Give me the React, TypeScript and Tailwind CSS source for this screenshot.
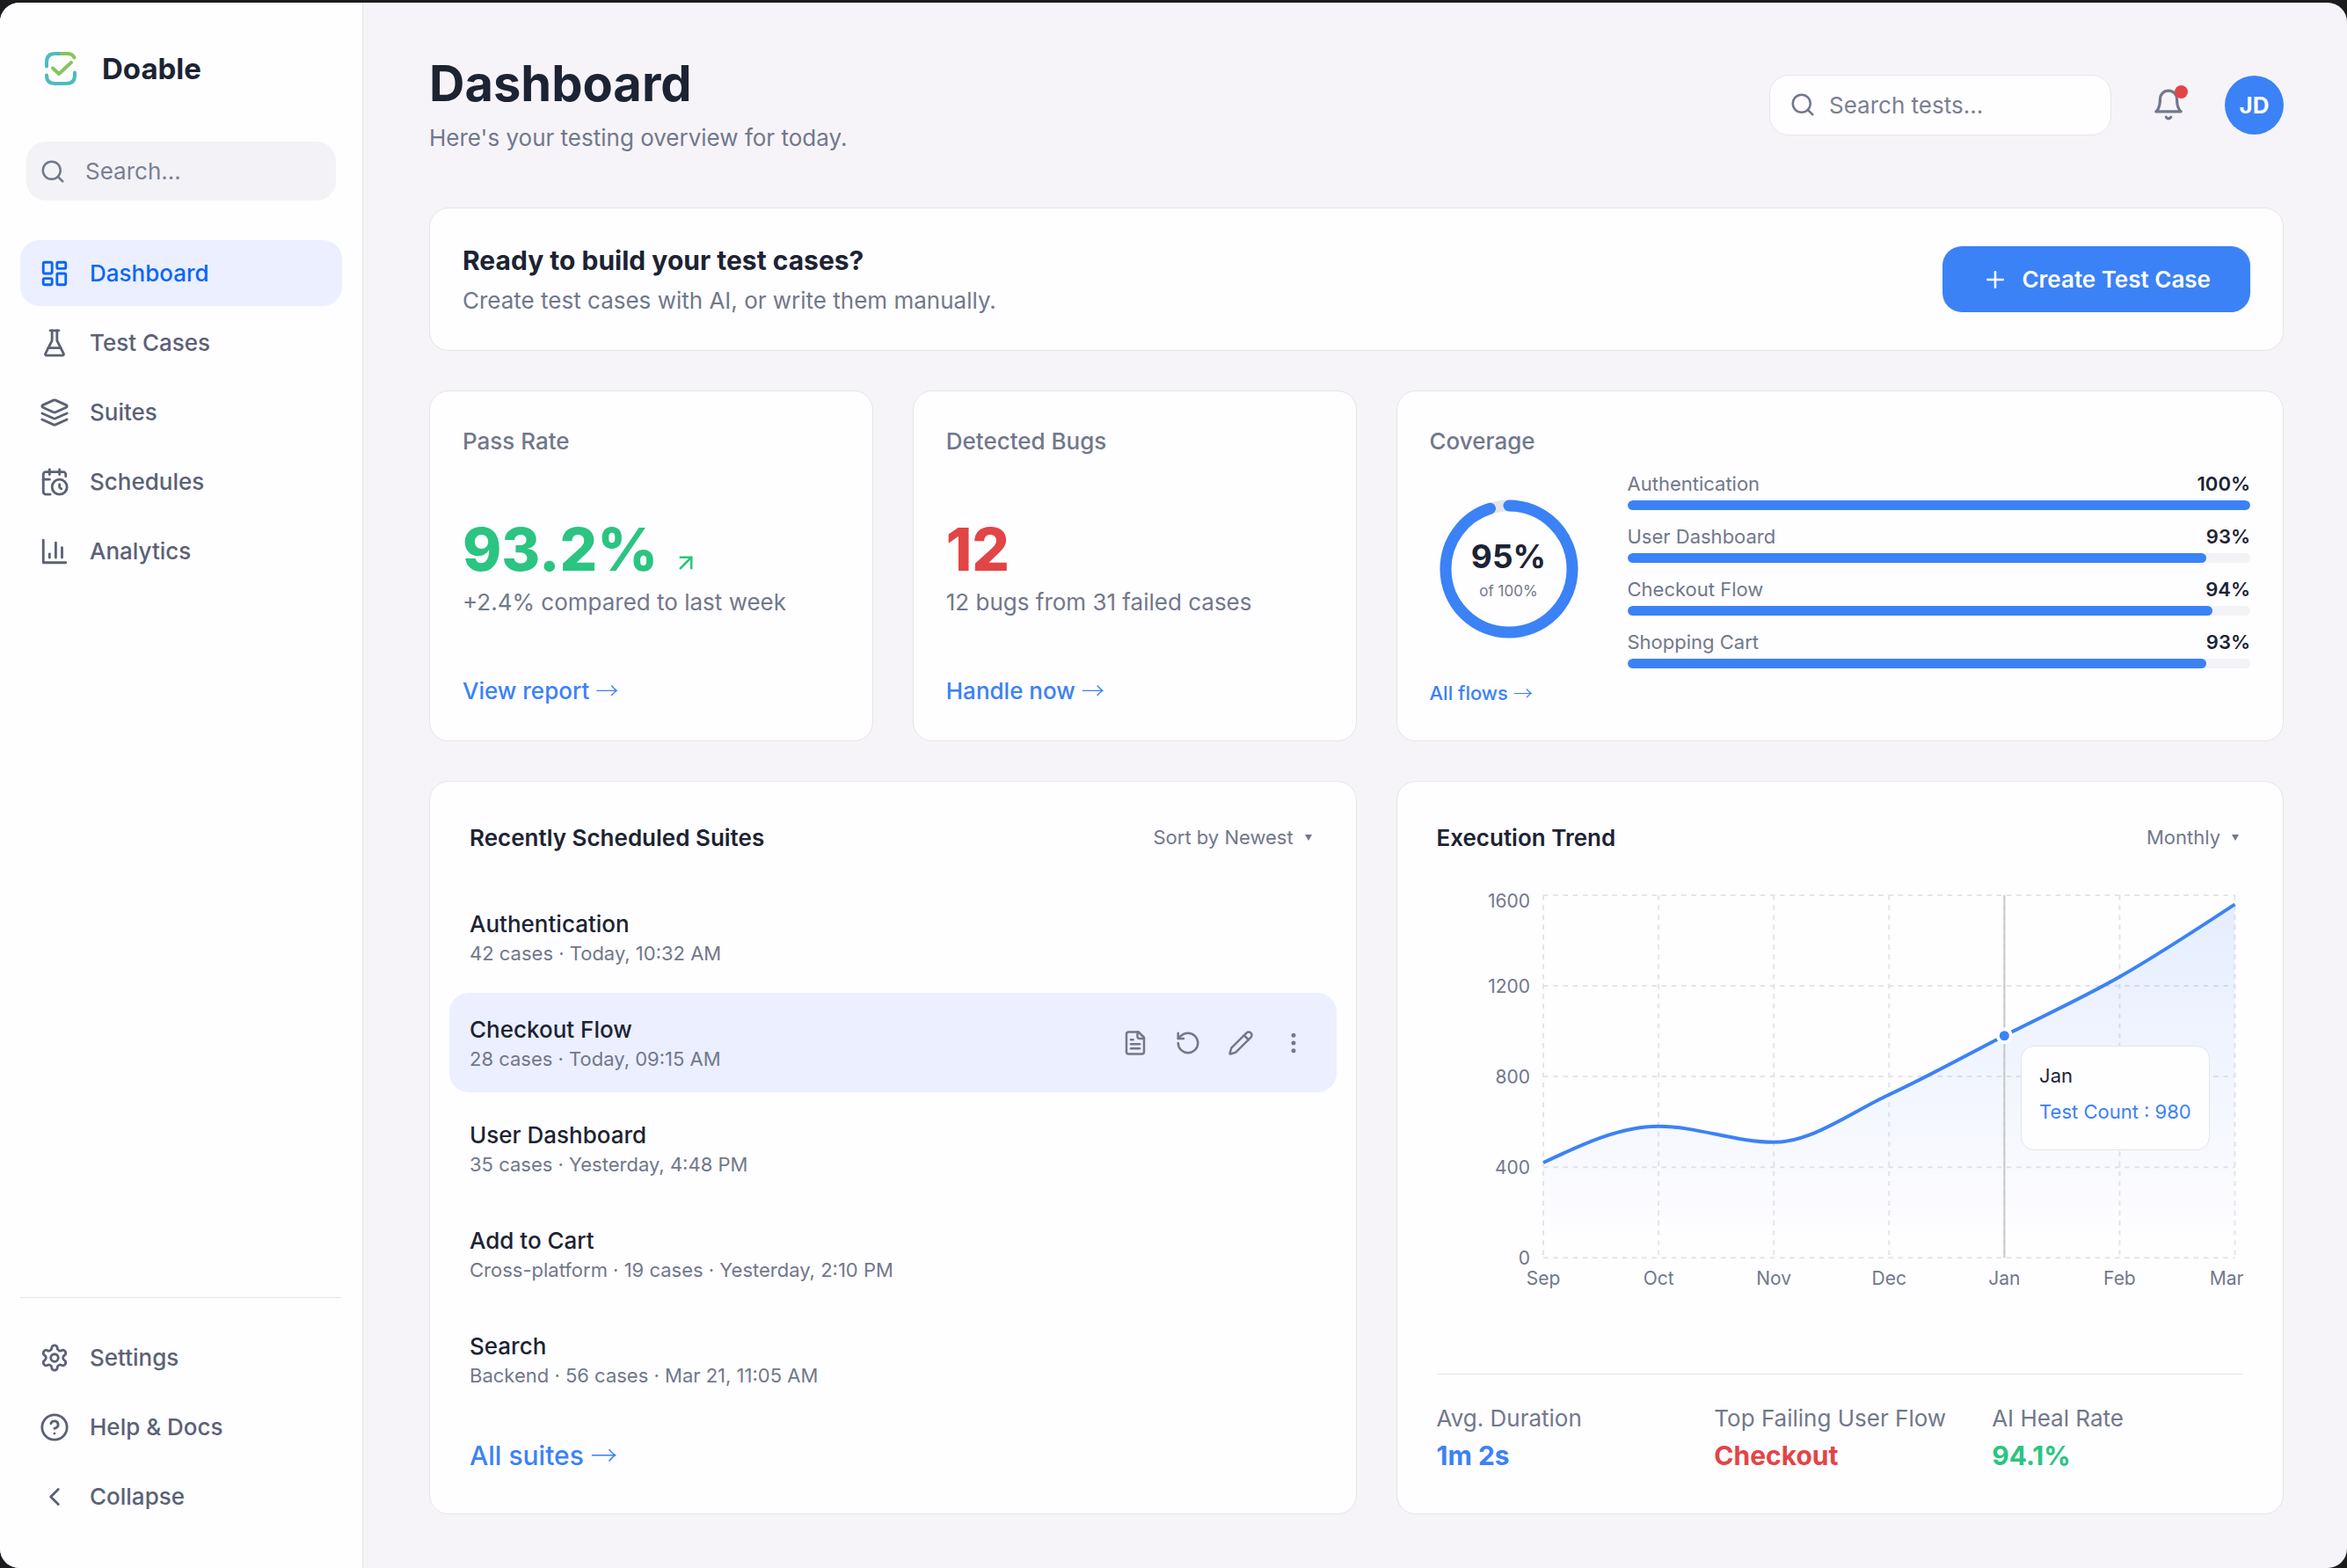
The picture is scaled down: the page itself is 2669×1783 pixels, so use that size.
import type { ReactNode } from "react";
import {
  ArrowUpRight,
  ChevronLeft,
  CircleQuestionMark,
  EllipsisVertical,
  LayoutDashboard,
  Pencil,
  Plus,
  RotateCcw,
  Search,
} from "lucide-react";

type IconProps = { className?: string };
type IconType = (props: IconProps) => ReactNode;

function Outline({ className, children }: { className?: string; children: ReactNode }) {
  return (
    <svg
      viewBox="0 0 24 24"
      className={className}
      fill="none"
      stroke="currentColor"
      strokeWidth="2"
      strokeLinecap="round"
      strokeLinejoin="round"
      aria-hidden="true"
    >
      {children}
    </svg>
  );
}

const FlaskIcon: IconType = ({ className }) => (
  <Outline className={className}>
    <path d="M10 2v7.527a2 2 0 0 1-.211.896L4.720 20.550a1 1 0 0 0 .9 1.450h12.760a1 1 0 0 0 .9-1.450l-5.069-10.127A2 2 0 0 1 14 9.527V2" />
    <path d="M8.500 2h7" />
    <path d="M7 16h10" />
  </Outline>
);

const LayersIcon: IconType = ({ className }) => (
  <Outline className={className}>
    <path d="m12.830 2.180a2 2 0 0 0-1.660 0L2.600 6.080a1 1 0 0 0 0 1.830l8.580 3.910a2 2 0 0 0 1.660 0l8.580-3.900a1 1 0 0 0 0-1.830Z" />
    <path d="m22 17.650-9.170 4.160a2 2 0 0 1-1.660 0L2 17.650" />
    <path d="m22 12.650-9.170 4.160a2 2 0 0 1-1.660 0L2 12.650" />
  </Outline>
);

const CalendarClockIcon: IconType = ({ className }) => (
  <Outline className={className}>
    <path d="M21 7.500V6a2 2 0 0 0-2-2H5a2 2 0 0 0-2 2v14a2 2 0 0 0 2 2h3.500" />
    <path d="M16 2v4" />
    <path d="M8 2v4" />
    <path d="M3 10h5" />
    <path d="M17.500 17.500 16 16.300V14" />
    <circle cx="16" cy="16" r="6" />
  </Outline>
);

const BarsIcon: IconType = ({ className }) => (
  <Outline className={className}>
    <path d="M3 3v18h18" />
    <path d="M18 17V9" />
    <path d="M13 17V5" />
    <path d="M8 17v-3" />
  </Outline>
);

const GearIcon: IconType = ({ className }) => (
  <Outline className={className}>
    <path d="M12.220 2h-.44a2 2 0 0 0-2 2v.18a2 2 0 0 1-1 1.730l-.43.25a2 2 0 0 1-2 0l-.15-.08a2 2 0 0 0-2.730.73l-.22.38a2 2 0 0 0 .73 2.730l.15.1a2 2 0 0 1 1 1.720v.51a2 2 0 0 1-1 1.740l-.15.09a2 2 0 0 0-.73 2.730l.22.38a2 2 0 0 0 2.730.73l.15-.08a2 2 0 0 1 2 0l.43.25a2 2 0 0 1 1 1.730V20a2 2 0 0 0 2 2h.44a2 2 0 0 0 2-2v-.18a2 2 0 0 1 1-1.730l.43-.25a2 2 0 0 1 2 0l.15.08a2 2 0 0 0 2.730-.73l.22-.39a2 2 0 0 0-.73-2.730l-.15-.08a2 2 0 0 1-1-1.740v-.5a2 2 0 0 1 1-1.740l.15-.09a2 2 0 0 0 .73-2.730l-.22-.38a2 2 0 0 0-2.730-.73l-.15.08a2 2 0 0 1-2 0l-.43-.25a2 2 0 0 1-1-1.730V4a2 2 0 0 0-2-2z" />
    <circle cx="12" cy="12" r="3" />
  </Outline>
);

const BellIcon: IconType = ({ className }) => (
  <Outline className={className}>
    <path d="M6 8a6 6 0 0 1 12 0c0 7 3 9 3 9H3s3-2 3-9" />
    <path d="M10.300 21a1.940 1.940 0 0 0 3.400 0" />
  </Outline>
);

const DocumentIcon: IconType = ({ className }) => (
  <Outline className={className}>
    <path d="M15 2H6a2 2 0 0 0-2 2v16a2 2 0 0 0 2 2h12a2 2 0 0 0 2-2V7Z" />
    <path d="M14 2v4a2 2 0 0 0 2 2h4" />
    <path d="M10 9H8" />
    <path d="M16 13H8" />
    <path d="M16 17H8" />
  </Outline>
);

const DashboardIcon: IconType = ({ className }) => <LayoutDashboard className={className} />;
const HelpIcon: IconType = ({ className }) => <CircleQuestionMark className={className} />;
const RerunIcon: IconType = ({ className }) => <RotateCcw className={className} />;
const EditIcon: IconType = ({ className }) => <Pencil className={className} />;
const MoreIcon: IconType = ({ className }) => <EllipsisVertical className={className} />;

type NavEntry = { label: string; icon: IconType; active?: boolean };

const mainNav: NavEntry[] = [
  { label: "Dashboard", icon: DashboardIcon, active: true },
  { label: "Test Cases", icon: FlaskIcon },
  { label: "Suites", icon: LayersIcon },
  { label: "Schedules", icon: CalendarClockIcon },
  { label: "Analytics", icon: BarsIcon },
];

const coverage = [
  { name: "Authentication", value: 100 },
  { name: "User Dashboard", value: 93 },
  { name: "Checkout Flow", value: 94 },
  { name: "Shopping Cart", value: 93 },
];

const suites = [
  { name: "Authentication", meta: "42 cases · Today, 10:32 AM" },
  { name: "Checkout Flow", meta: "28 cases · Today, 09:15 AM", active: true },
  { name: "User Dashboard", meta: "35 cases · Yesterday, 4:48 PM" },
  { name: "Add to Cart", meta: "Cross-platform · 19 cases · Yesterday, 2:10 PM" },
  { name: "Search", meta: "Backend · 56 cases · Mar 21, 11:05 AM" },
];

const suiteActions: { label: string; icon: IconType }[] = [
  { label: "View details", icon: DocumentIcon },
  { label: "Run again", icon: RerunIcon },
  { label: "Edit", icon: EditIcon },
  { label: "More", icon: MoreIcon },
];

const trend = [
  { month: "Sep", count: 420 },
  { month: "Oct", count: 580 },
  { month: "Nov", count: 510 },
  { month: "Dec", count: 720 },
  { month: "Jan", count: 980 },
  { month: "Feb", count: 1240 },
  { month: "Mar", count: 1560 },
];

function Logo() {
  return (
    <svg viewBox="0 0 60 60" className="size-[60px]" fill="none" strokeWidth="4" strokeLinecap="round" strokeLinejoin="round" aria-hidden="true">
      <path d="M15 27.500V22.500Q15 13 24.500 13H31" stroke="#4bbcc0" />
      <path d="M32 13H38.500Q44.500 13 46.500 17.500" stroke="#84c55c" />
      <path d="M47 34.500V37.500Q47 47 37.500 47H24.500Q15 47 15 37.500" stroke="#4bbcc0" />
      <path d="M22 29.500L29 36L43 23" stroke="#84c55c" />
    </svg>
  );
}

function NavItem({ label, icon: Icon, active }: NavEntry) {
  return (
    <a
      href="#"
      aria-current={active ? "page" : undefined}
      className={
        "flex h-[75px] items-center gap-[23px] rounded-[22px] px-[22px] text-[26px] font-medium " +
        (active ? "bg-[#ebefff] text-[#0866fa]" : "text-[#5b6175]")
      }
    >
      <Icon className="size-[34px] shrink-0" />
      {label}
    </a>
  );
}

function Sidebar() {
  return (
    <aside className="flex w-[413px] shrink-0 flex-col border-r border-[#e4e5ea] bg-[#fefdff] pt-[45px] pb-[44px]">
      <div className="flex items-center gap-[18px] pl-[38px]">
        <Logo />
        <span className="text-[33px] leading-[50px] font-bold text-[#1c2333]">Doable</span>
      </div>
      <label className="mx-[30px] mt-[53px] flex h-[67px] items-center gap-[22px] rounded-[22px] bg-[#f3f2f6] px-[15px] text-[#71788b]">
        <Search className="size-[30px] shrink-0" />
        <input
          type="text"
          aria-label="Search"
          placeholder="Search..."
          className="h-full w-full min-w-0 bg-transparent text-[26px] outline-none placeholder:text-[#7a8092]"
        />
      </label>
      <nav className="mt-[45px] flex flex-col gap-1 px-[23px]">
        {mainNav.map((item) => (
          <NavItem key={item.label} {...item} />
        ))}
      </nav>
      <nav className="mx-[23px] mt-auto flex flex-col gap-1 border-t border-[#e4e5ea] pt-[30px]">
        <NavItem label="Settings" icon={GearIcon} />
        <NavItem label="Help & Docs" icon={HelpIcon} />
        <button type="button" className="flex h-[75px] items-center gap-[23px] rounded-[22px] px-[22px] text-[26px] font-medium text-[#5b6175]">
          <ChevronLeft className="size-[34px] shrink-0" />
          Collapse
        </button>
      </nav>
    </aside>
  );
}

function Header() {
  return (
    <header className="flex items-center justify-between">
      <div>
        <h1 className="text-[56px] leading-[67px] font-bold text-[#1c2333]">Dashboard</h1>
        <p className="mt-2 text-[26px] leading-[39px] text-[#71788b]">Here's your testing overview for today.</p>
      </div>
      <div className="flex items-center gap-[30px]">
        <label className="flex h-[69px] w-[389px] items-center gap-[15px] rounded-[22px] border border-[#e4e5ea] bg-[#fefdff] px-[22px] text-[#71788b]">
          <Search className="size-[30px] shrink-0" />
          <input
            type="text"
            aria-label="Search tests"
            placeholder="Search tests..."
            className="h-full w-full min-w-0 bg-transparent text-[26px] outline-none placeholder:text-[#7a8092]"
          />
        </label>
        <button type="button" aria-label="Notifications" className="relative flex size-[69px] items-center justify-center text-[#71788b]">
          <BellIcon className="size-[38px]" />
          <span className="absolute top-[12px] right-[12px] size-[15px] rounded-full bg-[#e24546]" />
        </button>
        <button type="button" aria-label="Account" className="flex size-[67px] items-center justify-center rounded-full bg-[#3b82f6] text-[26px] font-bold text-white">
          JD
        </button>
      </div>
    </header>
  );
}

function Card({ className, children }: { className: string; children: ReactNode }) {
  return <section className={"rounded-[22px] border border-[#e4e5ea] bg-[#fefdff] " + className}>{children}</section>;
}

function Arrow() {
  return <span className="font-['Noto_Sans_CJK_JP',sans-serif] leading-none font-light">→</span>;
}

function StatCard(props: { title: string; value: string; tone: string; note: string; link: string; rising?: boolean }) {
  return (
    <Card className="flex flex-col p-[37px]">
      <h2 className="text-[26px] leading-[39px] font-medium text-[#71788b]">{props.title}</h2>
      <div className="flex flex-1 flex-col justify-center">
        <div className={"flex items-end gap-[17px] " + props.tone}>
          <span className="text-[67px] leading-[81px] font-extrabold">{props.value}</span>
          {props.rising && <ArrowUpRight className="mb-[10px] size-[30px]" />}
        </div>
        <p className="text-[26px] leading-[39px] text-[#71788b]">{props.note}</p>
      </div>
      <a href="#" className="text-[26px] leading-[39px] font-medium text-[#3b82f6]">
        {props.link} <Arrow />
      </a>
    </Card>
  );
}

function CoverageCard() {
  const radius = 72;
  const length = 2 * Math.PI * radius;
  return (
    <Card className="flex flex-col p-[37px]">
      <h2 className="text-[26px] leading-[39px] font-medium text-[#71788b]">Coverage</h2>
      <div className="my-[12px] flex items-center gap-[45px]">
        <div className="relative size-[180px] shrink-0">
          <svg viewBox="0 0 180 180" className="size-full -rotate-90" fill="none" strokeWidth="13" aria-hidden="true">
            <circle cx="90" cy="90" r={radius} stroke="#e4e5ea" />
            <circle cx="90" cy="90" r={radius} stroke="#3b82f6" strokeLinecap="round" strokeDasharray={`${length * 0.95} ${length}`} />
          </svg>
          <div className="absolute inset-0 flex flex-col items-center justify-center pt-1">
            <span className="text-[37px] leading-[46px] font-bold text-[#1c2333]">95%</span>
            <span className="text-[17px] leading-[32px] text-[#71788b]">of 100%</span>
          </div>
        </div>
        <ul className="flex flex-1 flex-col gap-[13px]">
          {coverage.map((flow) => (
            <li key={flow.name} className="flex flex-col gap-[2px]">
              <div className="flex justify-between text-[22px] leading-[34px]">
                <span className="text-[#71788b]">{flow.name}</span>
                <span className="font-semibold text-[#1c2333]">{flow.value}%</span>
              </div>
              <div className="h-[11px] overflow-hidden rounded-full bg-[#f3f2f6]">
                <div className="h-full rounded-full bg-[#3b82f6]" style={{ width: `${flow.value}%` }} />
              </div>
            </li>
          ))}
        </ul>
      </div>
      <a href="#" className="text-[22px] leading-[33px] font-medium text-[#3b82f6]">
        All flows <Arrow />
      </a>
    </Card>
  );
}

function Dropdown({ label, options }: { label: string; options: string[] }) {
  return (
    <div className="relative flex items-center text-[#71788b]">
      <select aria-label={label} className="appearance-none bg-transparent pr-[25px] text-[22px] leading-[37px] outline-none">
        {options.map((option) => (
          <option key={option}>{option}</option>
        ))}
      </select>
      <svg viewBox="0 0 8 7" className="pointer-events-none absolute right-[5px] h-[7px] w-[8px]" fill="currentColor" aria-hidden="true">
        <path d="M0 0H8L4 7Z" />
      </svg>
    </div>
  );
}

function SuitesCard() {
  return (
    <Card className="col-span-2 flex flex-col p-[45px]">
      <div className="flex items-center justify-between">
        <h2 className="text-[26px] leading-[37px] font-semibold text-[#1c2333]">Recently Scheduled Suites</h2>
        <Dropdown label="Sort order" options={["Sort by Newest", "Sort by Oldest"]} />
      </div>
      <ul className="-mx-[23px] mt-[38px] flex flex-col gap-[7px]">
        {suites.map((suite) => (
          <li
            key={suite.name}
            className={"flex items-center justify-between rounded-[22px] px-[23px] py-[23px] " + (suite.active ? "bg-[#ebefff]" : "")}
          >
            <div>
              <h3 className="text-[26px] leading-[37px] font-medium text-[#1c2333]">{suite.name}</h3>
              <p className="text-[22px] leading-[30px] text-[#71788b]">{suite.meta}</p>
            </div>
            {suite.active && (
              <div className="flex gap-2 text-[#71788b]">
                {suiteActions.map(({ label, icon: Icon }) => (
                  <button key={label} type="button" aria-label={label} className="flex size-[52px] items-center justify-center">
                    <Icon className="size-[30px]" />
                  </button>
                ))}
              </div>
            )}
          </li>
        ))}
      </ul>
      <a href="#" className="mt-auto text-[30px] leading-[42px] font-medium text-[#3b82f6]">
        All suites <Arrow />
      </a>
    </Card>
  );
}

const plot = { width: 917, height: 487, left: 121, right: 907, top: 9, bottom: 421, max: 1600 };

const points = trend.map((entry, i) => ({
  x: plot.left + (i * (plot.right - plot.left)) / (trend.length - 1),
  y: plot.bottom - (entry.count / plot.max) * (plot.bottom - plot.top),
}));

// Monotone cubic interpolation: no overshoot between neighbouring months.
function monotonePath(pts: { x: number; y: number }[]) {
  const slopes = pts.slice(1).map((p, i) => (p.y - pts[i].y) / (p.x - pts[i].x));
  const last = pts.length - 1;
  const tangents = pts.map((_, i) => {
    if (i === 0 || i === last) return 0;
    const a = slopes[i - 1];
    const b = slopes[i];
    if (a * b <= 0) return 0;
    return Math.sign(a) * 2 * Math.min(Math.abs(a), Math.abs(b), Math.abs(a + b) / 4);
  });
  tangents[0] = (3 * slopes[0] - tangents[1]) / 2;
  tangents[last] = (3 * slopes[last - 1] - tangents[last - 1]) / 2;
  return pts.slice(1).reduce((d, p, i) => {
    const q = pts[i];
    const third = (p.x - q.x) / 3;
    return `${d}C${q.x + third},${q.y + tangents[i] * third} ${p.x - third},${p.y - tangents[i + 1] * third} ${p.x},${p.y}`;
  }, `M${pts[0].x},${pts[0].y}`);
}

function TrendChart() {
  const line = monotonePath(points);
  const current = points[4];
  const ticks = [0, 400, 800, 1200, 1600];
  return (
    <div className="relative">
      <svg viewBox="0 0 917 487" className="w-full" role="img" aria-label="Test count by month">
        <defs>
          <linearGradient id="trend-fill" x1="0" y1="0" x2="0" y2="1">
            <stop offset="5%" stopColor="#3b82f6" stopOpacity="0.12" />
            <stop offset="95%" stopColor="#3b82f6" stopOpacity="0" />
          </linearGradient>
        </defs>
        <g stroke="#e4e5ea" strokeWidth="2" strokeDasharray="5.6 5.6">
          {ticks.map((tick) => {
            const y = plot.bottom - (tick / plot.max) * (plot.bottom - plot.top);
            return <line key={tick} x1={plot.left} x2={plot.right} y1={y} y2={y} />;
          })}
          {points.map((p) => (
            <line key={p.x} x1={p.x} x2={p.x} y1={plot.top} y2={plot.bottom} />
          ))}
        </g>
        <path d={`${line}L${plot.right},${plot.bottom}L${plot.left},${plot.bottom}Z`} fill="url(#trend-fill)" />
        <line x1={current.x} x2={current.x} y1={plot.top} y2={plot.bottom} stroke="#c6c8cc" strokeWidth="2" />
        <path d={line} fill="none" stroke="#3b82f6" strokeWidth="4" />
        <circle cx={current.x} cy={current.y} r="7.500" fill="#3b82f6" stroke="#fefdff" strokeWidth="4" />
        <g fill="#71788b" fontSize="21">
          {ticks.map((tick) => {
            const y = plot.bottom - (tick / plot.max) * (plot.bottom - plot.top);
            return (
              <text key={tick} x="106" y={Math.max(y, 15) + 8} textAnchor="end">
                {tick}
              </text>
            );
          })}
          {points.map((p, i) => (
            <text key={trend[i].month} x={i === 6 ? 917 : p.x} y="452" textAnchor={i === 6 ? "end" : "middle"}>
              {trend[i].month}
            </text>
          ))}
        </g>
      </svg>
      <div className="absolute top-[37%] left-[72%] ml-1 rounded-[15px] border border-[#e4e5ea] bg-[#fefdff] px-[20px] pt-[17px] pb-[26px] text-[22px] leading-[33px] whitespace-nowrap">
        <p className="text-[#1c2333]">Jan</p>
        <p className="mt-2 text-[#3b82f6]">Test Count : 980</p>
      </div>
    </div>
  );
}

function TrendCard() {
  const stats = [
    { label: "Avg. Duration", value: "1m 2s", tone: "text-[#3b82f6]" },
    { label: "Top Failing User Flow", value: "Checkout", tone: "text-[#e24546]" },
    { label: "AI Heal Rate", value: "94.1%", tone: "text-[#2bc481]" },
  ];
  return (
    <Card className="flex flex-col p-[45px]">
      <div className="mb-[38px] flex items-center justify-between">
        <h2 className="text-[26px] leading-[37px] font-semibold text-[#1c2333]">Execution Trend</h2>
        <Dropdown label="Period" options={["Monthly", "Weekly", "Yearly"]} />
      </div>
      <TrendChart />
      <dl className="mt-auto grid grid-cols-3 gap-[30px] border-t border-[#e4e5ea] pt-[30px]">
        {stats.map((stat) => (
          <div key={stat.label} className="whitespace-nowrap">
            <dt className="text-[26px] leading-[39px] text-[#71788b]">{stat.label}</dt>
            <dd className={"mt-[2px] text-[30px] leading-[42px] font-bold " + stat.tone}>{stat.value}</dd>
          </div>
        ))}
      </dl>
    </Card>
  );
}

export default function App() {
  return (
    <div className="flex min-h-screen flex-col bg-[#1c1b1c] pt-[3px] font-['Inter',sans-serif]">
      <div className="flex flex-1 overflow-hidden rounded-[22px] bg-[#f6f4f9]">
        <Sidebar />
        <main className="flex min-w-0 flex-1 flex-col pt-[59px] pr-[72px] pb-[61px] pl-[75px]">
          <Header />
          <Card className="mt-[60px] flex items-center justify-between p-[37px]">
            <div>
              <h2 className="text-[30px] leading-[45px] font-bold text-[#1c2333]">Ready to build your test cases?</h2>
              <p className="mt-[3px] text-[26px] leading-[39px] text-[#71788b]">Create test cases with AI, or write them manually.</p>
            </div>
            <button type="button" className="flex h-[75px] items-center gap-[15px] rounded-[22px] bg-[#3b82f6] px-[45px] text-[26px] font-semibold text-white">
              <Plus className="size-[30px]" />
              Create Test Case
            </button>
          </Card>
          <div className="mt-[45px] grid flex-1 grid-cols-[1fr_1fr_2fr] grid-rows-[auto_1fr] gap-[45px]">
            <StatCard title="Pass Rate" value="93.2%" tone="text-[#2bc481]" note="+2.4% compared to last week" link="View report" rising />
            <StatCard title="Detected Bugs" value="12" tone="text-[#e24546]" note="12 bugs from 31 failed cases" link="Handle now" />
            <CoverageCard />
            <SuitesCard />
            <TrendCard />
          </div>
        </main>
      </div>
    </div>
  );
}
